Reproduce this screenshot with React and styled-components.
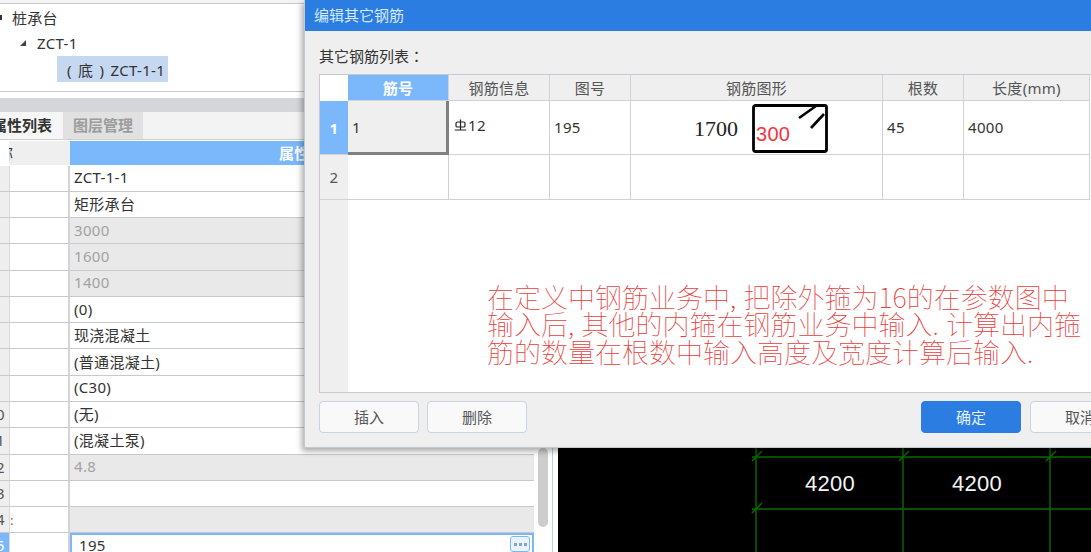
import React from 'react';
import styled, { createGlobalStyle } from 'styled-components';

const UI_FONT = '"Noto Sans", "Noto Sans CJK SC", sans-serif';

const GlobalStyle = createGlobalStyle`
  html, body {
    margin: 0;
    padding: 0;
    background: #fff;
    overflow: hidden;
  }
  * {
    box-sizing: border-box;
  }
`;

const Page = styled.div`
  position: relative;
  width: 1091px;
  height: 552px;
  overflow: hidden;
  display: grid;
  grid-template-columns: 553px 5px 1fr;
  font-family: ${UI_FONT};
  font-size: 15px;
  letter-spacing: 0.3px;
  color: #333;
  background: #fff;
`;

const LeftPanel = styled.div`
  display: flex;
  flex-direction: column;
  height: 552px;
  overflow: hidden;
  border-right: 1px solid #c3ccd8;
`;

const TopEdge = styled.div`
  height: 4px;
  flex: none;
  background: #f4f4f4;
  border-bottom: 1px solid #c8c8cc;
`;

const TreePanel = styled.div`
  height: 88px;
  flex: none;
  border-bottom: 1px solid #c8c8cc;
  background: #fff;
`;

const TreeRow = styled.div`
  height: 26px;
  display: flex;
  align-items: center;
  padding-left: ${p => p.$indent}px;
  gap: 11px;
`;

const TreeLabel = styled.span`
  display: flex;
  align-items: center;
  height: 26px;
  padding: ${p => (p.$selected ? '0 3px 0 10px' : '0')};
  background: ${p => (p.$selected ? '#c6d8f1' : 'transparent')};
  word-spacing: ${p => (p.$selected ? 2 : 0)}px;
  white-space: pre;
`;

const Caret = styled.span`
  width: 0;
  height: 0;
  border-left: 6px solid transparent;
  border-bottom: 6px solid #444;
`;

const RootDot = styled.span`
  width: 2px;
  height: 5px;
  background: #333;
  margin-right: -1px;
`;

const GrayBar = styled.div`
  height: 14px;
  flex: none;
  margin-top: 6px;
  background: #d5d6da;
`;

const TabStrip = styled.div`
  height: 28px;
  flex: none;
  display: flex;
  background: #f3f3f3;
  border-bottom: 1px solid #cfcfcf;
  margin-bottom: 1px;
`;

const Tab = styled.div`
  width: ${p => p.$width}px;
  margin-right: 1px;
  padding-bottom: 3px;
  display: flex;
  align-items: center;
  justify-content: ${p => (p.$active ? 'flex-end' : 'center')};
  padding-right: ${p => (p.$active ? 10 : 0)}px;
  overflow: hidden;
  white-space: nowrap;
  font-weight: 700;
  letter-spacing: 0;
  background: ${p => (p.$active ? '#f6f6f6' : '#e1e1e1')};
  color: ${p => (p.$active ? '#333' : '#9c9c9c')};
`;

const TableArea = styled.div`
  flex: 1;
  display: flex;
  min-height: 0;
`;

const PropGrid = styled.div`
  width: 534px;
  flex: none;
  display: grid;
  grid-template-columns: 9px 61px 1fr;
  grid-template-rows: 24.5px;
  grid-auto-rows: 26.29px;
  align-content: start;
`;

const HeaderBlank = styled.div`
  background: #fff;
  height: 24px;
`;

const HeaderName = styled.div`
  height: 24px;
  background: #efefef;
  overflow: hidden;
  white-space: nowrap;
  line-height: 24px;
  text-indent: -11px;
`;

const HeaderValue = styled.div`
  height: 24px;
  background: #7ab8fb;
  color: #fff;
  font-weight: 700;
  text-align: center;
  line-height: 24px;
`;

const NumCell = styled.div`
  overflow: hidden;
  background: ${p => (p.$active ? '#7ab8fb' : '#eeeeee')};
  color: ${p => (p.$active ? '#fff' : '#555')};
  border-bottom: 1px solid #c9c9cd;
  line-height: 25px;
`;

const NumText = styled.span`
  display: block;
  width: 24px;
  margin-left: -16px;
  text-align: center;
`;

const NameCell = styled.div`
  background: #fff;
  border-bottom: 1px solid #c9c9cd;
  border-left: 1px solid #d8d8d8;
  border-right: 2px solid #d4d4d8;
  color: #666;
  font-size: 13px;
  line-height: 27px;
`;

const ValueCell = styled.div`
  display: flex;
  align-items: center;
  padding: 0 0 2px 4px;
  background: ${p => (p.$disabled ? '#e9e9e9' : '#fff')};
  color: ${p => (p.$disabled ? '#a2a2a2' : '#333')};
  border-bottom: 1px solid #c9c9cd;
  white-space: nowrap;
`;

const EditCell = styled.div`
  display: flex;
  align-items: center;
  justify-content: space-between;
  padding: 0 2px 2px 7px;
  height: 24px;
  background: #fff;
  border: 2px solid #7ab8fb;
  border-bottom: none;
`;

const MoreButton = styled.button`
  width: 20px;
  height: 16px;
  padding: 0;
  align-self: flex-start;
  margin-top: 1px;
  display: flex;
  align-items: center;
  justify-content: center;
  gap: 2px;
  background: #eaf3fd;
  border: 1px solid #7ab8fb;
  border-radius: 3px;
`;

const MoreDot = styled.span`
  width: 3px;
  height: 3px;
  background: #7aa6da;
`;

const ScrollTrack = styled.div`
  flex: 1;
  padding: 307px 4px 0;
`;

const ScrollThumb = styled.div`
  width: 10px;
  height: 79px;
  border-radius: 5px;
  background: #cdcdcd;
`;

const Cad = styled.div`
  grid-column: 3;
  background: #000;
  height: 552px;
`;

const CadDrawing = styled.svg`
  display: block;
`;

const Dialog = styled.div`
  position: absolute;
  left: 304px;
  top: 0;
  width: 841px;
  height: 448px;
  display: flex;
  flex-direction: column;
  background: #efefef;
  border: 1px solid #c4c8d0;
  border-top: none;
  box-shadow: -2px 3px 6px rgba(0, 0, 0, 0.35);
`;

const DialogTitle = styled.div`
  height: 31px;
  flex: none;
  display: flex;
  align-items: center;
  padding: 0 0 3px 9px;
  background: #2b7de1;
  color: #d9e8fb;
  letter-spacing: 0;
`;

const DialogBody = styled.div`
  flex: 1;
  display: flex;
  flex-direction: column;
  padding: 14px 14px 14px;
  min-height: 0;
`;

const ListLabel = styled.div`
  height: 22px;
  line-height: 22px;
  margin-bottom: 7px;
  letter-spacing: 0;
`;

const LabelColon = styled.span`
  font-family: "Noto Sans CJK TC", sans-serif;
`;

const RebarTable = styled.div`
  flex: 1;
  display: grid;
  grid-template-columns: 28px 101px 101px 81px 252px 81px 126px 1fr;
  grid-template-rows: 26px 54px 45px 1fr;
  border: 1px solid #c9c9cd;
  background: #fff;
  min-height: 0;
`;

const Corner = styled.div`
  background: #fff;
`;

const HeadCell = styled.div`
  display: flex;
  align-items: center;
  justify-content: center;
  background: ${p => (p.$active ? '#7ab8fb' : '#efefef')};
  color: ${p => (p.$active ? '#fff' : '#555')};
  font-weight: ${p => (p.$active ? 700 : 400)};
  border-right: 1px solid #d2d2d6;
  border-bottom: 1px solid #d2d2d6;
`;

const RowHead = styled.div`
  display: flex;
  align-items: center;
  justify-content: center;
  background: ${p => (p.$active ? '#7ab8fb' : '#efefef')};
  color: ${p => (p.$active ? '#fff' : '#555')};
  font-weight: ${p => (p.$active ? 700 : 400)};
  border-bottom: 1px solid #d2d2d6;
`;

const Gutter = styled.div`
  background: #efefef;
`;

const Cell = styled.div`
  display: flex;
  align-items: center;
  padding: 0 0 2px 4px;
  border-right: 1px solid #d2d2d6;
  border-bottom: 1px solid #d2d2d6;
`;

const ActiveCell = styled(Cell)`
  padding-bottom: 0;
  background: #efefef;
  border-right: 3px solid #808080;
  border-bottom: 3px solid #808080;
`;

const GradeCell = styled(Cell)`
  padding: 0 0 5px 5px;
  gap: 1px;
`;

const ShapeCell = styled(Cell)`
  padding: 2px 0 0 63px;
  gap: 14px;
`;

const LengthLabel = styled.span`
  font-family: "Liberation Serif", serif;
  font-size: 22px;
  letter-spacing: 0;
  color: #222;
`;

const Footer = styled.div`
  flex: none;
  display: flex;
  gap: 8px;
  margin-top: 8px;
`;

const FooterGap = styled.div`
  flex: 1;
`;

const Button = styled.button`
  width: 100px;
  height: 32px;
  padding: 0 0 2px;
  font-family: inherit;
  font-size: 15px;
  border-radius: 4px;
  margin-left: ${p => (p.$tight ? 1 : 0)}px;
  background: ${p => (p.$primary ? '#2b7de1' : '#f9f9f9')};
  color: ${p => (p.$primary ? '#e6f0fc' : '#555')};
  border: 1px solid ${p => (p.$primary ? '#2b7de1' : '#c8d2e2')};
`;

const Annotation = styled.div`
  position: absolute;
  left: 182px;
  top: 282.5px;
  font-family: "Noto Sans CJK SC", sans-serif;
  font-size: 27px;
  font-weight: 100;
  line-height: 27.5px;
  letter-spacing: 0;
  color: #e83c3c;
  white-space: nowrap;
`;

const NoteLine = styled.div`
  display: block;
`;

const Stop = styled.span`
  display: inline-block;
  width: 0.5em;
`;

const propRows = [
  { num: '', value: 'ZCT-1-1' },
  { num: '', value: '矩形承台' },
  { num: '', value: '3000', disabled: true },
  { num: '', value: '1600', disabled: true },
  { num: '', value: '1400', disabled: true },
  { num: '', value: '(0)' },
  { num: '', value: '现浇混凝土' },
  { num: '', value: '(普通混凝土)' },
  { num: '', value: '(C30)' },
  { num: '10', value: '(无)' },
  { num: '11', value: '(混凝土泵)' },
  { num: '12', value: '4.8', disabled: true },
  { num: '13', value: '' },
  { num: '14', value: '', disabled: true, name: ':' },
];

const headers = ['筋号', '钢筋信息', '图号', '钢筋图形', '根数', '长度(mm)'];

// grade symbol of the rebar, it is a special font glyph in the original
const GradeIcon = () => (
  <svg width="13" height="13" viewBox="0 0 13 13" fill="none" stroke="#222" strokeWidth="1.2">
    <path d="M2 7V4.5Q2 3 3.5 3H9.5Q11 3 11 4.5V7Q11 8 9.5 8H3.5Q2 8 2 7Z" />
    <path d="M6.5 0.5V10.5M0.8 11H12.2" />
  </svg>
);

const StirrupShape = () => (
  <svg width="76" height="49" viewBox="0 0 76 49">
    <rect x="1.5" y="1.5" width="73" height="46" rx="2" fill="#fff" stroke="#000" strokeWidth="2.8" />
    <path d="M47 14L64 2M59 24L72 10" stroke="#000" strokeWidth="2.6" fill="none" />
    <text x="4" y="37" fontFamily="Liberation Sans, sans-serif" fontSize="20" fill="#f5333f">300</text>
  </svg>
);

const CadGrid = () => {
  const ox = 558;
  const xs = [756, 903, 1050];
  const ys = [457, 509];
  return (
    <CadDrawing width="533" height="552" viewBox={`${ox} 0 533 552`}>
      <g stroke="#0b6a00" strokeWidth="1.4" fill="none">
        {xs.map(x => <line key={x} x1={x} y1="448" x2={x} y2="552" />)}
        {ys.map(y => <line key={y} x1="752" y1={y} x2="1091" y2={y} />)}
        {xs.map(x => <line key={x} x1={x - 4} y1="461" x2={x + 6} y2="451" />)}
        <line x1="752" y1="513" x2="762" y2="503" />
      </g>
      <g fill="#f4f4f4" fontFamily="Liberation Sans, sans-serif" fontSize="22" textAnchor="middle">
        <text x="830" y="491">4200</text>
        <text x="977" y="491">4200</text>
      </g>
    </CadDrawing>
  );
};

export default function App() {
  return (
    <Page>
      <GlobalStyle />
      <LeftPanel>
        <TopEdge />
        <TreePanel>
          <TreeRow $indent={0}>
            <RootDot />
            <TreeLabel>桩承台</TreeLabel>
          </TreeRow>
          <TreeRow $indent={20}>
            <Caret />
            <TreeLabel>ZCT-1</TreeLabel>
          </TreeRow>
          <TreeRow $indent={57}>
            <TreeLabel $selected>( 底 ) ZCT-1-1</TreeLabel>
          </TreeRow>
        </TreePanel>
        <GrayBar />
        <TabStrip>
          <Tab $active $width={62}>属性列表</Tab>
          <Tab $width={80}>图层管理</Tab>
        </TabStrip>
        <TableArea>
          <PropGrid>
            <HeaderBlank />
            <HeaderName>称</HeaderName>
            <HeaderValue>属性值</HeaderValue>
            {propRows.map((row, i) => (
              <React.Fragment key={i}>
                <NumCell><NumText>{row.num}</NumText></NumCell>
                <NameCell>{row.name}</NameCell>
                <ValueCell $disabled={row.disabled}>{row.value}</ValueCell>
              </React.Fragment>
            ))}
            <NumCell $active><NumText>15</NumText></NumCell>
            <NameCell />
            <EditCell>
              195
              <MoreButton aria-label="更多">
                <MoreDot />
                <MoreDot />
                <MoreDot />
              </MoreButton>
            </EditCell>
          </PropGrid>
          <ScrollTrack>
            <ScrollThumb />
          </ScrollTrack>
        </TableArea>
      </LeftPanel>
      <div />
      <Cad>
        <CadGrid />
      </Cad>

      <Dialog>
        <DialogTitle>编辑其它钢筋</DialogTitle>
        <DialogBody>
          <ListLabel>其它钢筋列表<LabelColon>：</LabelColon></ListLabel>
          <RebarTable>
            <Corner />
            {headers.map((h, i) => (
              <HeadCell key={h} $active={i === 0}>{h}</HeadCell>
            ))}
            <Corner />

            <RowHead $active>1</RowHead>
            <ActiveCell>1</ActiveCell>
            <GradeCell><GradeIcon />12</GradeCell>
            <Cell>195</Cell>
            <ShapeCell>
              <LengthLabel>1700</LengthLabel>
              <StirrupShape />
            </ShapeCell>
            <Cell>45</Cell>
            <Cell>4000</Cell>
            <Corner />

            <RowHead>2</RowHead>
            <Cell />
            <Cell />
            <Cell />
            <Cell />
            <Cell />
            <Cell />
            <Corner />

            <Gutter />
          </RebarTable>
          <Footer>
            <Button>插入</Button>
            <Button>删除</Button>
            <FooterGap />
            <Button $primary>确定</Button>
            <Button $tight>取消</Button>
          </Footer>
        </DialogBody>
        <Annotation>
          <NoteLine>在定义中钢筋业务中<Stop>,</Stop>把除外箍为16的在参数图中</NoteLine>
          <NoteLine>输入后<Stop>,</Stop>其他的内箍在钢筋业务中输入<Stop>.</Stop>计算出内箍</NoteLine>
          <NoteLine>筋的数量在根数中输入高度及宽度计算后输入<Stop>.</Stop></NoteLine>
        </Annotation>
      </Dialog>
    </Page>
  );
}
